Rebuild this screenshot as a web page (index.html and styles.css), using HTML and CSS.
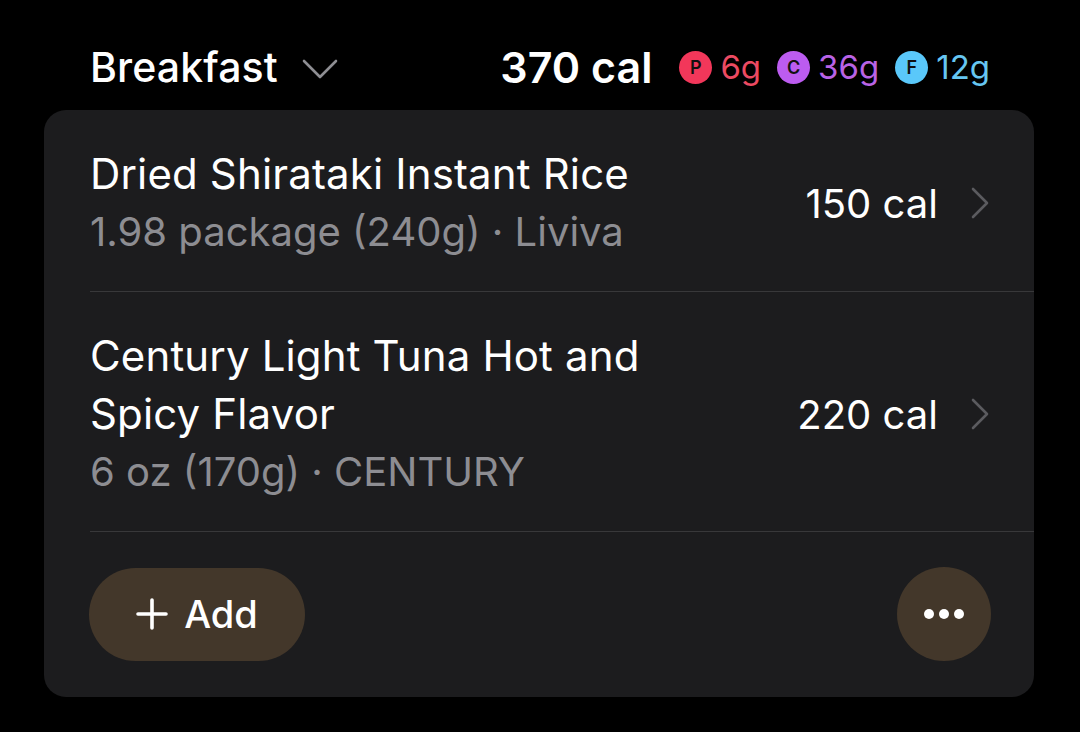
FILE: index.html
```html
<!DOCTYPE html>
<html>
<head>
<meta charset="utf-8">
<link rel="stylesheet" href="styles.css">
</head>
<body>
<div class="page">
  <header class="meal-header">
    <div class="meal-title">
      <span>Breakfast</span>
      <svg class="chev-down" width="36" height="20" viewBox="0 0 36 20"><path d="M2 2 L18 18 L34 2" fill="none" stroke="#8e8e93" stroke-width="2.6" stroke-linecap="round" stroke-linejoin="round"/></svg>
    </div>
    <div class="meal-summary">
      <span class="total">370 cal</span>
      <span class="macro protein"><span class="dot">P</span>6g</span>
      <span class="macro carbs"><span class="dot">C</span>36g</span>
      <span class="macro fat"><span class="dot">F</span>12g</span>
    </div>
  </header>
  <section class="card">
    <div class="item">
      <div class="item-text">
        <div class="item-name">Dried Shirataki Instant Rice</div>
        <div class="item-meta">1.98 package (240g) · Liviva</div>
      </div>
      <div class="item-cal">150 cal</div>
      <svg class="chev-right" width="20" height="32" viewBox="0 0 20 32"><path d="M3 2 L17 16 L3 30" fill="none" stroke="#5b5b5f" stroke-width="2.6" stroke-linecap="round" stroke-linejoin="round"/></svg>
    </div>
    <div class="item">
      <div class="item-text">
        <div class="item-name">Century Light Tuna Hot and<br>Spicy Flavor</div>
        <div class="item-meta">6 oz (170g) · CENTURY</div>
      </div>
      <div class="item-cal">220 cal</div>
      <svg class="chev-right" width="20" height="32" viewBox="0 0 20 32"><path d="M3 2 L17 16 L3 30" fill="none" stroke="#5b5b5f" stroke-width="2.6" stroke-linecap="round" stroke-linejoin="round"/></svg>
    </div>
    <div class="actions">
      <button class="add-btn"><svg width="32" height="32" viewBox="0 0 32 32"><path d="M16 2 V30 M2 16 H30" stroke="#fff" stroke-width="3.6" stroke-linecap="round"/></svg><span>Add</span></button>
      <button class="more-btn"><span class="d"></span><span class="d"></span><span class="d"></span></button>
    </div>
  </section>
</div>
</body>
</html>
```
FILE: styles.css
```css
html, body {
  margin: 0;
  padding: 0;
  background: #000;
}
body {
  font-family: Inter, "Noto Sans", "Liberation Sans", sans-serif;
  color: #fff;
  width: 1080px;
  height: 732px;
  overflow: hidden;
}
.page {
  padding: 0 46px 0 44px;
}
.meal-header {
  display: flex;
  align-items: center;
  justify-content: space-between;
  height: 110px;
  padding: 30px 44px 6px 46px;
  box-sizing: border-box;
}
.meal-title {
  display: flex;
  align-items: center;
  gap: 24px;
  font-size: 41px;
  font-weight: 500;
  letter-spacing: 0.1px;
}
.chev-down {
  margin-top: 4px;
}
.meal-summary {
  display: flex;
  align-items: center;
  font-size: 33px;
}
.total {
  font-size: 43px;
  font-weight: 600;
  margin-right: 27px;
}
.macro {
  display: flex;
  align-items: center;
  margin-right: 16px;
  font-weight: 400;
}
.macro:last-child { margin-right: 0; }
.dot {
  width: 33px;
  height: 33px;
  border-radius: 50%;
  color: #111;
  font-size: 18px;
  font-weight: 600;
  display: inline-flex;
  align-items: center;
  justify-content: center;
  margin-right: 8px;
}
.protein { color: #ec4a62; }
.protein .dot { background: #f2375a; }
.carbs { color: #b963e6; }
.carbs .dot { background: #bc5cf0; }
.fat { color: #66c6f2; }
.fat .dot { background: #5ac8fa; }

.card {
  background: #1c1c1e;
  border-radius: 22px;
  padding-left: 46px;
  padding-bottom: 36px;
}
.item {
  display: flex;
  align-items: center;
  padding: 35px 44px 30px 0;
  border-bottom: 1px solid #38383a;
}
.item-text {
  flex: 1;
}
.item-name {
  font-size: 42px;
  line-height: 58px;
  letter-spacing: 0.15px;
}
.item-meta {
  font-size: 40px;
  line-height: 58px;
  color: #8d8d92;
}
.item-cal {
  font-size: 40px;
  margin-right: 32px;
}
.actions {
  display: flex;
  justify-content: space-between;
  align-items: center;
  padding: 35px 43px 0 0;
}
.add-btn {
  height: 93px;
  width: 216px;
  border-radius: 47px;
  border: none;
  background: #43372a;
  color: #fff;
  display: flex;
  align-items: center;
  justify-content: center;
  gap: 16px;
  font-family: inherit;
  font-size: 38px;
  font-weight: 500;
  padding: 0;
  margin-left: -1px;
}
.more-btn {
  width: 94px;
  height: 94px;
  border-radius: 50%;
  border: none;
  background: #43372a;
  display: flex;
  align-items: center;
  justify-content: center;
  gap: 5px;
  padding: 0;
}
.more-btn .d {
  width: 10px;
  height: 10px;
  border-radius: 50%;
  background: #fff;
}
```
